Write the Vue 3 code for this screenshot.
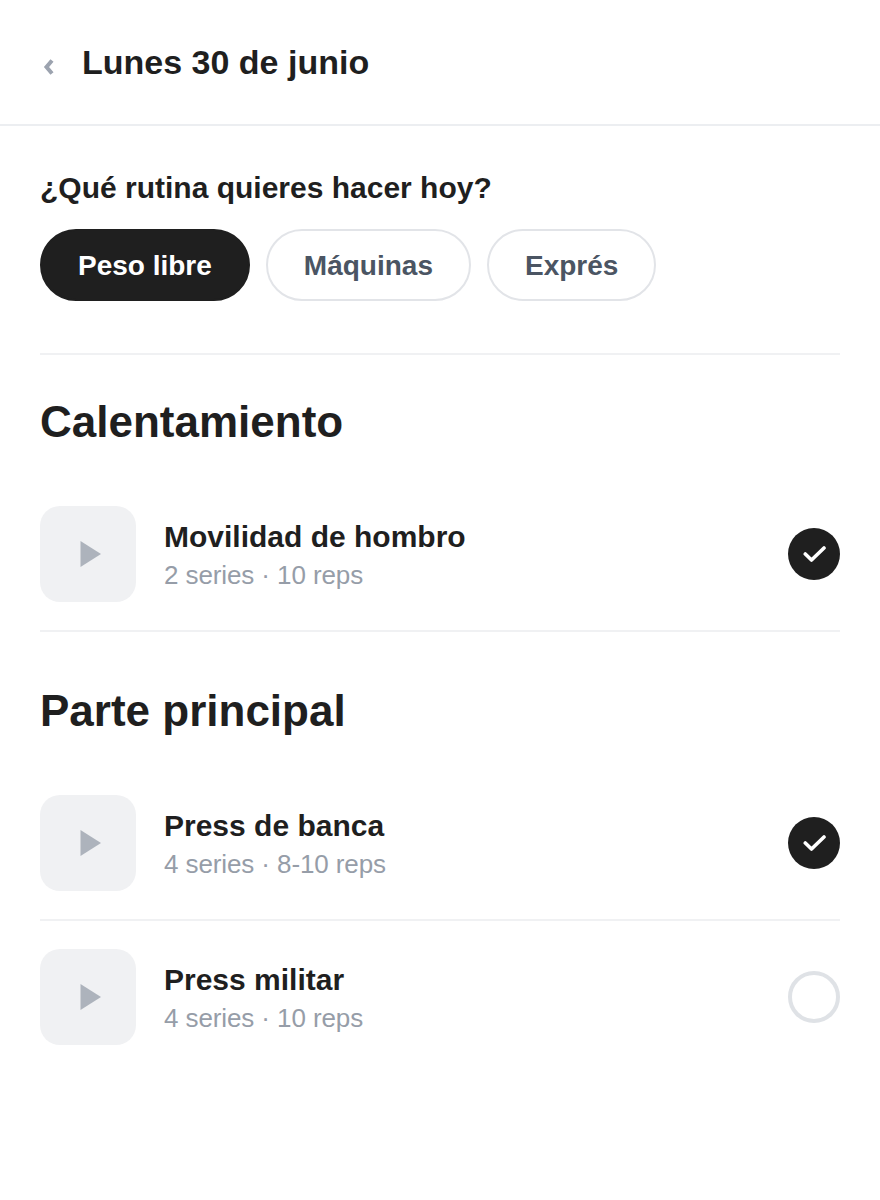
<script setup>
const choices = [
  { label: "Peso libre", active: true },
  { label: "Máquinas", active: false },
  { label: "Exprés", active: false },
];

const sections = [
  {
    title: "Calentamiento",
    items: [{ name: "Movilidad de hombro", detail: "2 series · 10 reps", done: true }],
  },
  {
    title: "Parte principal",
    items: [
      { name: "Press de banca", detail: "4 series · 8-10 reps", done: true },
      { name: "Press militar", detail: "4 series · 10 reps", done: false },
    ],
  },
];
</script>

<template>
  <div class="page">
    <header class="top">
      <svg width="18" height="34" viewBox="0 0 18 34" fill="none">
        <path d="M12 15.5L6.5 22L12 28.5" stroke="#9ca3af" stroke-width="4" />
      </svg>
      <h1>Lunes 30 de junio</h1>
    </header>

    <main class="content">
      <section class="picker">
        <h2>¿Qué rutina quieres hacer hoy?</h2>
        <div class="choices">
          <button
            v-for="choice in choices"
            :key="choice.label"
            class="choice"
            :class="{ active: choice.active }"
          >
            {{ choice.label }}
          </button>
        </div>
      </section>

      <section v-for="section in sections" :key="section.title" class="block">
        <h3>{{ section.title }}</h3>
        <div v-for="item in section.items" :key="item.name" class="row">
          <div class="thumb">
            <svg width="28" height="26" viewBox="0 0 28 26">
              <path d="M6.5 0L27 13L6.5 26Z" fill="#adb3bc" />
            </svg>
          </div>
          <div class="info">
            <div class="name">{{ item.name }}</div>
            <div class="detail">{{ item.detail }}</div>
          </div>
          <div v-if="item.done" class="status done">
            <svg width="24" height="24" viewBox="0 0 24 24" fill="none">
              <path d="M3.3 12L9.5 18L22 6" stroke="#fff" stroke-width="3.6" stroke-linecap="round" stroke-linejoin="round" />
            </svg>
          </div>
          <div v-else class="status"></div>
        </div>
      </section>
    </main>
  </div>
</template>

<style scoped>
.page {
  width: 880px;
  min-height: 1200px;
  background: #fff;
  color: #1f1f1f;
  font-family: "Liberation Sans", Arial, sans-serif;
}

.top {
  display: flex;
  align-items: center;
  gap: 24px;
  height: 124px;
  padding: 0 40px;
  border-bottom: 2px solid #eceef1;
}

h1 {
  margin: 0;
  font-size: 34px;
  font-weight: 700;
}

.content {
  padding: 0 40px;
}

.picker {
  padding: 44px 0 52px;
}

h2 {
  margin: 0 0 23px;
  font-size: 30px;
  line-height: 36px;
  font-weight: 700;
}

.choices {
  display: flex;
  gap: 16px;
}

.choice {
  height: 72px;
  padding: 2px 36px 0;
  border: 2px solid #e2e4e8;
  border-radius: 36px;
  background: #fff;
  color: #4b5563;
  font-family: inherit;
  font-size: 28px;
  font-weight: 700;
}

.choice.active {
  background: #1f1f1f;
  border-color: #1f1f1f;
  color: #fff;
}

.block {
  border-top: 2px solid #f0f1f3;
}

.block + .block {
  border-top: none;
}

h3 {
  margin: 0;
  padding: 39px 0 28px;
  font-size: 44px;
  line-height: 56px;
  font-weight: 700;
}

.block + .block h3 {
  padding-top: 51px;
}

.row {
  display: flex;
  align-items: center;
  gap: 28px;
  padding: 28px 0;
  border-bottom: 2px solid #f0f1f3;
}

.block:last-child .row:last-child {
  border-bottom: none;
}

.thumb {
  display: flex;
  align-items: center;
  justify-content: center;
  width: 96px;
  height: 96px;
  flex-shrink: 0;
  border-radius: 20px;
  background: #f0f1f3;
}

.info {
  flex: 1;
  padding-top: 4px;
}

.name {
  font-size: 30px;
  line-height: 38px;
  font-weight: 700;
}

.detail {
  font-size: 26px;
  line-height: 38px;
  letter-spacing: -0.1px;
  color: #969da8;
}

.status {
  display: flex;
  align-items: center;
  justify-content: center;
  box-sizing: border-box;
  width: 52px;
  height: 52px;
  border: 4px solid #dfe2e6;
  border-radius: 50%;
}

.status.done {
  background: #1f1f1f;
  border: none;
}
</style>
